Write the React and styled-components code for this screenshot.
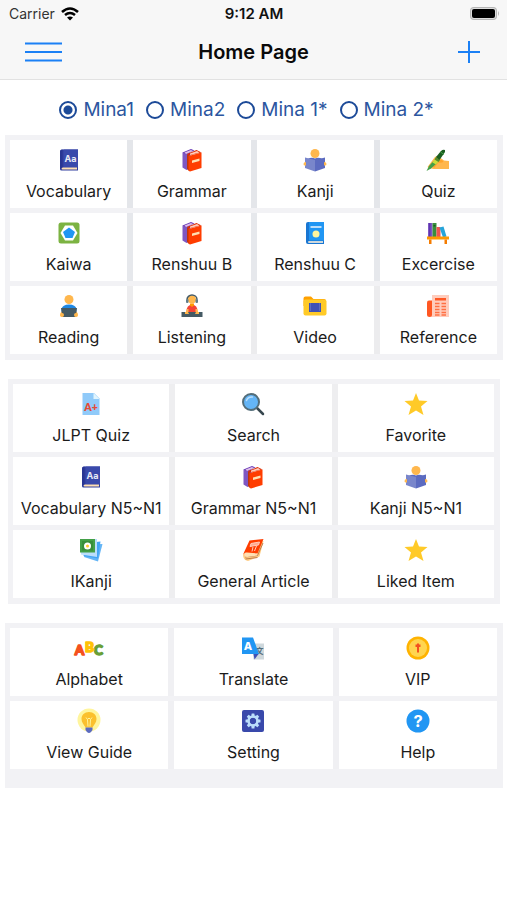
import React, { useState } from "react";
import styled, { createGlobalStyle } from "styled-components";

const GlobalStyle = createGlobalStyle`
  * { box-sizing: border-box; }
  body {
    margin: 0;
    background: #fff;
    color: #1b1b1b;
    font-family: Inter, "Liberation Sans", sans-serif;
  }
  button { font: inherit; color: inherit; border: 0; padding: 0; cursor: pointer; }
`;

const Header = styled.header`
  background: #f7f7f7;
  border-bottom: 1px solid #e2e2e2;
`;

const StatusBar = styled.div`
  display: grid;
  grid-template-columns: 1fr auto 1fr;
  align-items: center;
  height: 28px;
  padding: 0 8px 0 9px;
  font-size: 14px;
  line-height: 20px;
  svg { display: block; }
`;

const Carrier = styled.div`
  display: flex;
  align-items: center;
  gap: 6px;
  color: #333;
`;

const Clock = styled.time`
  font-size: 15px;
  font-weight: 600;
  color: #111;
`;

const Battery = styled.div`
  justify-self: end;
`;

const NavBar = styled.nav`
  display: flex;
  align-items: center;
  justify-content: space-between;
  height: 51px;
  padding: 0 25px 3px;
`;

const NavButton = styled.button`
  display: flex;
  justify-content: ${(p) => p.$align};
  width: 40px;
  background: none;
`;

const Title = styled.h1`
  margin: 0;
  font-size: 20px;
  line-height: 24px;
  font-weight: 600;
  color: #0a0a0a;
`;

const BookPicker = styled.fieldset`
  display: flex;
  justify-content: center;
  gap: 12px;
  margin: 0;
  padding: 18px 14px 13px 0;
  border: 0;
`;

const Option = styled.label`
  display: flex;
  align-items: center;
  gap: 6px;
  font-size: 19px;
  line-height: 24px;
  color: #2c56a0;
`;

const Radio = styled.input`
  appearance: none;
  width: 18px;
  height: 18px;
  margin: 0;
  border: 2px solid #1c4a98;
  border-radius: 50%;
  &:checked {
    background: radial-gradient(circle, #1c4a98 4px, #fff 5px);
  }
`;

const Main = styled.main`
  display: flex;
  flex-direction: column;
  gap: 19px;
`;

const Panel = styled.section`
  display: flex;
  flex-direction: column;
  gap: 5px;
  margin: 0 ${(p) => p.$inset[1]}px 0 ${(p) => p.$inset[0]}px;
  padding: 5px 6px ${(p) => p.$bottom}px 5px;
  background: #f2f2f5;
`;

const Row = styled.div`
  display: grid;
  grid-template-columns: repeat(${(p) => p.$columns}, minmax(0, 1fr));
  gap: 6px;
  background: ${(p) => p.$gutter};
`;

const Tile = styled.button`
  display: flex;
  flex-direction: column;
  align-items: center;
  gap: 9px;
  padding: 8px 0 7px;
  background: #fff;
  white-space: nowrap;
`;

const Picture = styled.svg`
  display: block;
  width: 24px;
  height: 24px;
  font-family: Inter, sans-serif;
`;

const Label = styled.span`
  font-size: 16px;
  line-height: 20px;
`;

const Dictionary = () => (
  <>
    <path d="M6 42V7a4 4 0 0 1 4-4h32v42H9a3 3 0 0 1-3-3Z" fill="#303f9f" />
    <path d="M13 3h29v36H13Z" fill="#3949ab" />
    <path d="M11 39h29v4H11a2 2 0 0 1 0-4Z" fill="#ffe0b2" />
    <path d="M6 8a5 5 0 0 1 5-5v36q-3 0-3 4-2-1-2-3Z" fill="#283593" />
    <text x="27" y="27" textAnchor="middle" fontSize="18" fontWeight="700" fill="#e8eaf6">Aa</text>
  </>
);

const Books = () => (
  <>
    <path d="M5 9v30l8 5 8-4V7Z" fill="#7e57c2" />
    <path d="M5 9 22 2l7 3-17 7Z" fill="#673ab7" />
    <path d="M9 9 22 4l4 2-14 6Z" fill="#e1bee7" />
    <path d="M14 12v30l4 4V15Z" fill="#bf360c" />
    <path d="m14 12 19-8 10 5-25 6Z" fill="#dd2c00" />
    <path d="m20 11 14-5 5 3-19 5Z" fill="#ffccbc" />
    <path d="m17 16 26-7v31l-23 7q-3 0-3-4Z" fill="#ff3d00" />
    <path d="m24 25 15-4v5l-15 4Z" fill="#ffe0b2" />
  </>
);

const Reader = () => (
  <>
    <circle cx="24" cy="11" r="9" fill="#ffb74d" />
    <path d="M9 22q8-4 15-1 7-3 15 1v12H9Z" fill="#5c6bc0" />
    <path d="m4 19 20 5v23L4 40Z" fill="#7986cb" />
    <path d="m44 19-20 5v23l20-7Z" fill="#5c6bc0" />
    <path d="M1 32q0-4 5-4v7q-5 1-5-3ZM47 32q0-4-5-4v7q5 1 5-3Z" fill="#ffb74d" />
  </>
);

const WritingHand = () => (
  <>
    <path d="M3 38 17 19q3-4 7-3l12 9 10 1v16H15L6 40Z" fill="#ffb74d" />
    <path d="m21 25 10-1q7 3 1 5l-8 1-7 9-5-2Z" fill="#ffa32b" />
    <path d="m15 26 7 4-12 11-9 5 5-10Z" fill="#43a047" />
    <path d="m20 18 8 6-8 9-7-4Z" fill="#cddc39" />
    <path d="m20 18 8 6-3 4-8-5Z" fill="#558b2f" />
    <path d="M20 18 30 6q4-4 8-2v4L27 24Z" fill="#1b5e20" />
    <path d="m29 8 7 5" stroke="#43a047" strokeWidth="2" />
  </>
);

const Kaiwa = () => (
  <>
    <rect x="3" y="3" width="42" height="42" rx="5" fill="#7cb342" />
    <path d="M16 9h16l9 15-9 15H16L7 24Z" fill="#fff" />
    <path d="m24 13 12 9-5 12H17l-5-12Z" fill="#2196f3" />
  </>
);

const BlueBook = () => (
  <>
    <path d="M6 42V6a4 4 0 0 1 4-4h32v44H10a4 4 0 0 1-4-4Z" fill="#1976d2" />
    <path d="M12 2h30v37H12Z" fill="#2196f3" />
    <path d="M12 40h28v4H12a2 2 0 0 1 0-4Z" fill="#cfd8dc" />
    <path d="M15 10h22v4H15Z" fill="#bbdefb" />
    <circle cx="26" cy="26" r="7" fill="#fff59d" />
  </>
);

const Bookshelf = () => (
  <>
    <path d="M4 4h9v29H4Z" fill="#7e57c2" />
    <path d="M6 4h3v29H6Z" fill="#5e35b1" />
    <path d="M13 4h8v29h-8Z" fill="#388e3c" />
    <path d="M15 8h4v3h-4Z" fill="#1b5e20" />
    <path d="M21 12h8v21h-8Z" fill="#ef5350" />
    <path d="m27 13 8-2 6 20-7 2Z" fill="#26a5da" />
    <path d="M2 31h44v6H2Z" fill="#ff9800" />
    <path d="M6 37h5v9H6ZM37 37h5v9h-5Z" fill="#f57c00" />
  </>
);

const LaptopReader = () => (
  <>
    <circle cx="24" cy="11" r="9" fill="#ffb74d" />
    <path d="M9 30q2-9 15-9t15 9v7H9Z" fill="#1e88e5" />
    <path d="M7 38q3-5 6-4v11H8q-2-2-1-7ZM41 38q-3-5-6-4v11h5q2-2 1-7Z" fill="#ffb74d" />
    <path d="M8 28h32l-3 18H11Z" fill="#455a64" />
    <circle cx="10" cy="42" r="4" fill="#ffb74d" />
    <circle cx="38" cy="42" r="4" fill="#ffb74d" />
  </>
);

const Listener = () => (
  <>
    <circle cx="24" cy="11" r="8" fill="#ffb74d" />
    <path d="M14 11a10 9 0 0 1 20 0" fill="none" stroke="#455a64" strokeWidth="3" />
    <rect x="12" y="10" width="5" height="8" rx="2" fill="#607d8b" />
    <rect x="31" y="10" width="5" height="8" rx="2" fill="#607d8b" />
    <path d="M13 35q0-13 11-14 11 1 11 14v3H13Z" fill="#f44336" />
    <path d="M20 19h8v4l-4 3-4-3Z" fill="#ff9800" />
    <path d="M14 30h3v8h-6ZM34 30h-3v8h6Z" fill="#ffb74d" />
    <path d="M3 36h42v10H3Z" fill="#455a64" />
    <path d="M10 36h6l2 4h-8ZM38 36h-6l-2 4h8Z" fill="#ffb74d" />
  </>
);

const VideoFolder = () => (
  <>
    <path d="M1 9q0-4 4-4h11l5 5h21q4 0 4 4v10H1Z" fill="#ffa000" />
    <rect x="1" y="11" width="46" height="32" rx="4" fill="#ffca28" />
    <path d="M12 18h24v18H12Z" fill="#3f51b5" />
    <path d="M15 19v16M33 19v16" stroke="#7986cb" strokeWidth="2" strokeDasharray="2 2" />
  </>
);

const Newspaper = () => (
  <>
    <path d="M12 2h34v44H9V34l3-4Z" fill="#ffccbc" />
    <path d="M2 17q0-4 4-4h6v28q0 5-5 5t-5-5Z" fill="#ff5722" />
    <path d="M18 8h22v5H18Z" fill="#ff5722" />
    <path d="M18 19h9M31 19h9M18 25h9M31 25h9M18 31h9M31 31h9M18 37h9M31 37h9M18 42h9M31 42h9" stroke="#ff7043" strokeWidth="3" />
  </>
);

const ExamSheet = () => (
  <>
    <path d="M7 2h23l11 11v33H7Z" fill="#90caf9" />
    <path d="m29 2 12 12H29Z" fill="#e1f5fe" />
    <text x="24" y="37" textAnchor="middle" fontSize="21" fontWeight="800" fill="#e64a35" fontFamily="Lato, sans-serif">A+</text>
  </>
);

const Magnifier = () => (
  <>
    <path d="m30 30 14 14" stroke="#37474f" strokeWidth="5" strokeLinecap="round" />
    <circle cx="20" cy="20" r="16" fill="#64b5f6" stroke="#546e7a" strokeWidth="4" />
    <path d="M11 17q3-8 12-7" fill="none" stroke="#bbdefb" strokeWidth="3" strokeLinecap="round" />
  </>
);

const Star = () => (
  <path d="m24 2 6 15 17 1-13 11 5 17-15-9-15 9 5-17L1 18l17-1Z" fill="#ffca28" />
);

const Cards = () => (
  <>
    <path d="m16 13 31-1-9 35-28-9Z" fill="#64b5f6" />
    <path d="m16 10 27-3-5 34-29-5Z" fill="#42a5f5" />
    <path d="M4 2h32v36L4 33Z" fill="#bbdefb" />
    <path d="M2 2h30v27H2Z" fill="#43a047" />
    <path d="M6 6h22v19H6Z" fill="#388e3c" />
    <circle cx="17" cy="16" r="7" fill="#fff" />
    <circle cx="17" cy="16" r="3" fill="#ffca28" />
  </>
);

const Article = () => (
  <>
    <path d="M4 33 17 13l28-7-8 31-23 9Q4 44 4 33Z" fill="#ffcc80" />
    <path d="m8 38 25-3L44 10M9 42l24-3" stroke="#bf7b4d" strokeWidth="2" fill="none" />
    <path d="M5 31 17 5l28-3-12 29-22 4Q6 36 5 31Z" fill="#ff3d00" />
    <path d="m20 11 17-3-2 6-17 3ZM24 18l-2 9M31 16l-4 10" fill="#ffab91" stroke="#ffccbc" strokeWidth="2" />
    <path d="M6 33q0-5 6-4l21 2-1 4-20 3q-5 0-6-5Z" fill="#ffe0b2" />
  </>
);

const Abc = () => (
  <g fontFamily="Lato, sans-serif" fontSize="27" fontWeight="900" strokeWidth="3" strokeLinejoin="round" textAnchor="middle">
    <text x="5" y="37" fill="#f4511e" stroke="#f4511e">A</text>
    <text x="43" y="37" fill="#689f38" stroke="#689f38">C</text>
    <text x="25" y="32" fill="#ffc107" stroke="#ffc107">B</text>
  </g>
);

const TranslateIcon = () => (
  <>
    <path d="M22 15h24v32H25Z" fill="#cfd8dc" />
    <text x="29" y="36" fontSize="16" fontWeight="700" fill="#546e7a" fontFamily="Noto Sans CJK SC, sans-serif">文</text>
    <path d="M25 36h10l-8 11Z" fill="#3f51b5" />
    <path d="M2 3h22l12 33H2Z" fill="#2196f3" />
    <text x="14" y="28" textAnchor="middle" fontSize="22" fontWeight="800" fill="#fff">A</text>
  </>
);

const Coin = () => (
  <>
    <circle cx="24" cy="24" r="23" fill="#ffb300" />
    <circle cx="24" cy="24" r="18" fill="#ffd54f" />
    <path d="M22 33V22h-3v-5h3v-2h4v2h3v5h-3v11Z" fill="#f4511e" />
  </>
);

const Bulb = () => (
  <>
    <circle cx="24" cy="22" r="23" fill="#fff59d" />
    <path d="M24 6c-9 0-15 6-15 14 0 7 5 11 8 17h14c3-6 8-10 8-17 0-8-6-14-15-14Z" fill="#fbc02d" />
    <path d="m18 17 3 4 3-3 3 3 3-4M21 21l1 14M27 21l-1 14" stroke="#fff59d" strokeWidth="2" fill="none" />
    <path d="M17 37h14v5l-3 4q-4 4-8 0l-3-4Z" fill="#5c6bc0" />
  </>
);

const teeth = [0, 45, 90, 135, 180, 225, 270, 315];
const Gear = () => (
  <>
    <rect x="2" y="2" width="44" height="44" rx="4" fill="#3949ab" />
    {teeth.map((a) => (
      <rect key={a} x="21" y="9" width="6" height="8" rx="1" fill="#bbdefb" transform={`rotate(${a} 24 24)`} />
    ))}
    <circle cx="24" cy="24" r="9" fill="none" stroke="#bbdefb" strokeWidth="5" />
  </>
);

const HelpIcon = () => (
  <>
    <circle cx="24" cy="24" r="23" fill="#2196f3" />
    <text x="24" y="36" textAnchor="middle" fontSize="33" fontWeight="700" fill="#fff">?</text>
  </>
);

const panels = [
  {
    name: "Lessons", columns: 4, inset: [5, 4], bottom: 6,
    rows: [
      { gutter: "#e4e6ea", tiles: [["Vocabulary", Dictionary], ["Grammar", Books], ["Kanji", Reader], ["Quiz", WritingHand]] },
      { gutter: "#e6e8ec", tiles: [["Kaiwa", Kaiwa], ["Renshuu B", Books], ["Renshuu C", BlueBook], ["Excercise", Bookshelf]] },
      { gutter: "#ececee", tiles: [["Reading", LaptopReader], ["Listening", Listener], ["Video", VideoFolder], ["Reference", Newspaper]] },
    ],
  },
  {
    name: "Practice", columns: 3, inset: [8, 7], bottom: 6,
    rows: [
      { gutter: "#eeeef0", tiles: [["JLPT Quiz", ExamSheet], ["Search", Magnifier], ["Favorite", Star]] },
      { gutter: "#eeeef0", tiles: [["Vocabulary N5~N1", Dictionary], ["Grammar N5~N1", Books], ["Kanji N5~N1", Reader]] },
      { gutter: "#eeeef0", tiles: [["IKanji", Cards], ["General Article", Article], ["Liked Item", Star]] },
    ],
  },
  {
    name: "Tools", columns: 3, inset: [5, 4], bottom: 19,
    rows: [
      { gutter: "#f0f0f3", tiles: [["Alphabet", Abc], ["Translate", TranslateIcon], ["VIP", Coin]] },
      { gutter: "#f0f0f3", tiles: [["View Guide", Bulb], ["Setting", Gear], ["Help", HelpIcon]] },
    ],
  },
];

const books = ["Mina1", "Mina2", "Mina 1*", "Mina 2*"];

export default function App() {
  const [book, setBook] = useState("Mina1");
  return (
    <>
      <GlobalStyle />
      <Header>
        <StatusBar>
          <Carrier>
            Carrier
            <svg width="18" height="14" viewBox="0 0 18 14" aria-hidden="true">
              <path d="M1 5q8-7 16 0M4 8q5-4 10 0" fill="none" stroke="#000" strokeWidth="2.6" />
              <path d="m6 10.500q3-2 6 0l-3 3Z" fill="#000" />
            </svg>
          </Carrier>
          <Clock>9:12 AM</Clock>
          <Battery>
            <svg width="29" height="14" viewBox="0 0 29 14" role="img" aria-label="Battery full">
              <rect x="0" y="0" width="27" height="13" rx="4" fill="#b5b5b5" />
              <path d="M28 4q2 2.500 0 5Z" fill="#b5b5b5" />
              <rect x="1" y="1" width="25" height="11" rx="3" fill="#dedede" />
              <rect x="2" y="2" width="23" height="9" rx="2" fill="#000" />
            </svg>
          </Battery>
        </StatusBar>
        <NavBar>
          <NavButton $align="flex-start" aria-label="Menu">
            <svg width="37" height="20" viewBox="0 0 37 20">
              <path d="M0 1.500h37M0 10h37M0 18.500h37" stroke="#1b80f5" strokeWidth="2.200" />
            </svg>
          </NavButton>
          <Title>Home Page</Title>
          <NavButton $align="flex-end" aria-label="Add">
            <svg width="26" height="26" viewBox="0 0 26 26">
              <path d="M2 13h22M13 2v22" stroke="#1b80f5" strokeWidth="2" />
            </svg>
          </NavButton>
        </NavBar>
      </Header>
      <BookPicker aria-label="Book">
        {books.map((b) => (
          <Option key={b}>
            <Radio type="radio" name="book" checked={book === b} onChange={() => setBook(b)} />
            {b}
          </Option>
        ))}
      </BookPicker>
      <Main>
        {panels.map((panel) => (
          <Panel key={panel.name} aria-label={panel.name} $inset={panel.inset} $bottom={panel.bottom}>
            {panel.rows.map((row) => (
              <Row key={row.tiles[0][0]} $columns={panel.columns} $gutter={row.gutter}>
                {row.tiles.map(([label, Drawing]) => (
                  <Tile key={label} type="button">
                    <Picture viewBox="0 0 48 48" overflow="visible" aria-hidden="true"><Drawing /></Picture>
                    <Label>{label}</Label>
                  </Tile>
                ))}
              </Row>
            ))}
          </Panel>
        ))}
      </Main>
    </>
  );
}
